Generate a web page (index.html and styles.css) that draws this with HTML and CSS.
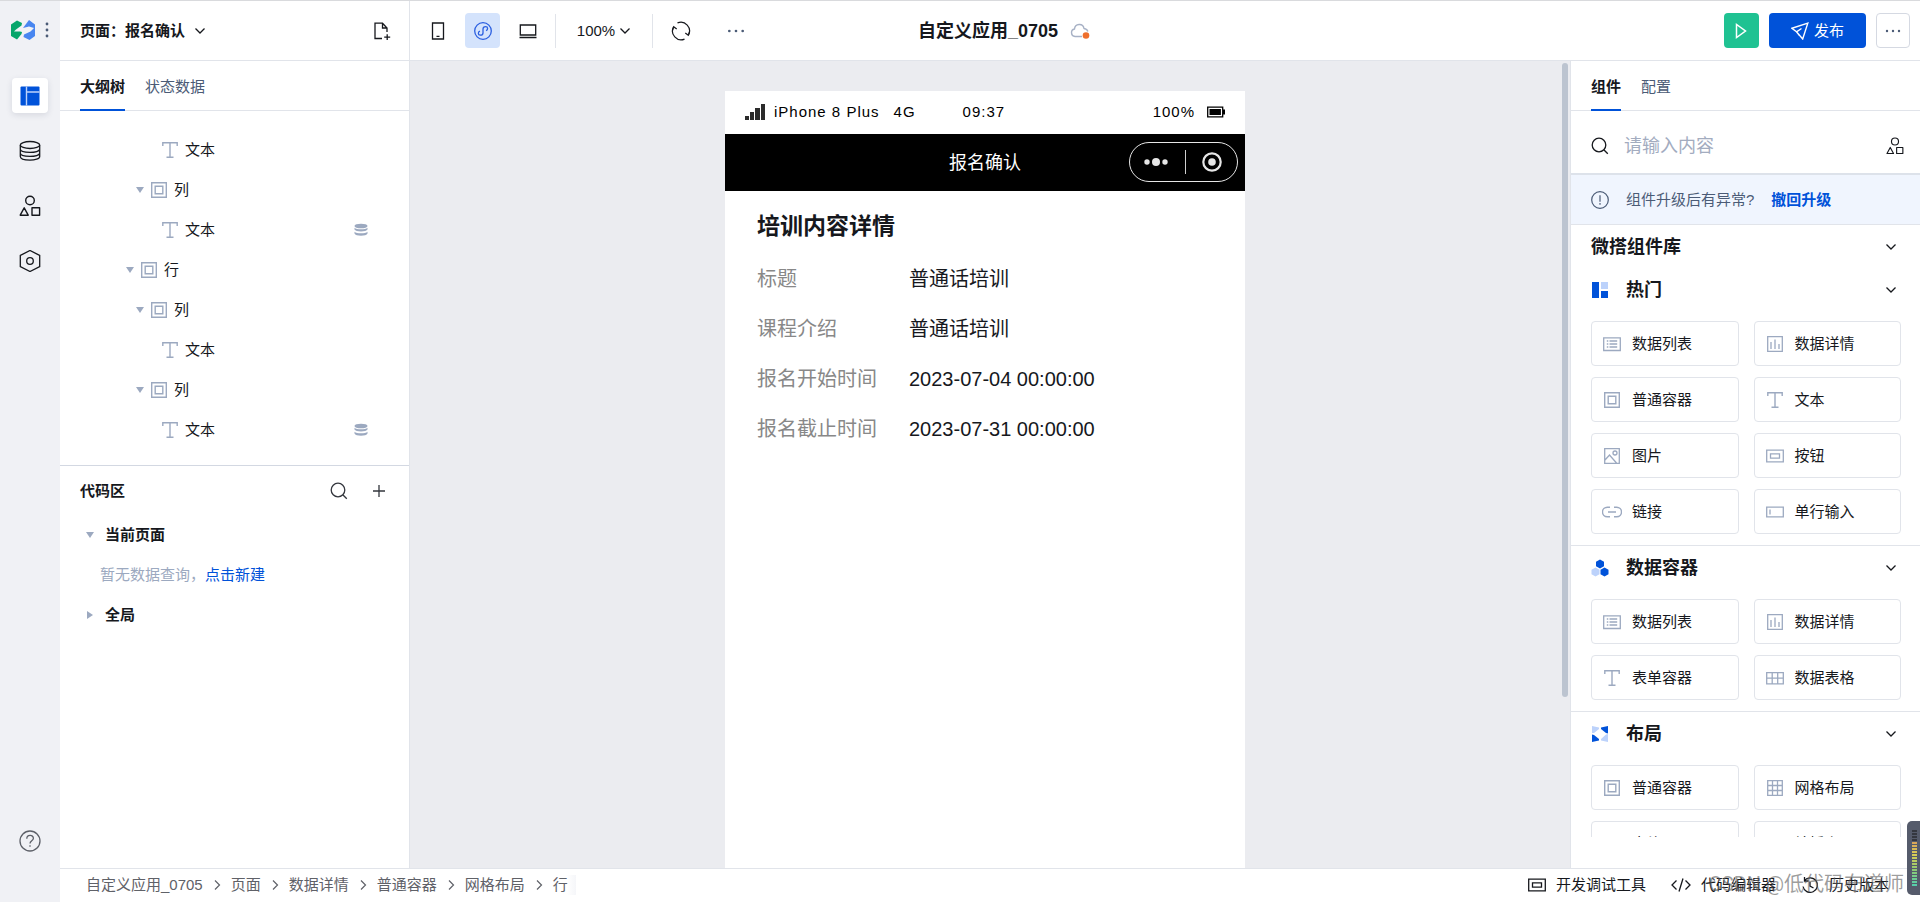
FILE: index.html
```
<!DOCTYPE html>
<html lang="zh-CN">
<head>
<meta charset="utf-8">
<title>自定义应用_0705</title>
<link rel="stylesheet" href="styles.css">
</head>
<body>
<svg class="sprite" aria-hidden="true">
  <symbol id="chevron" viewBox="0 0 12 12"><path d="M1.500 3.500 6 8l4.500-4.500" fill="none" stroke="currentColor" stroke-width="1.300"/></symbol>
  <symbol id="next" viewBox="0 0 12 12"><path d="M4 1.500 8.500 6 4 10.500" fill="none" stroke="currentColor" stroke-width="1.200"/></symbol>
  <symbol id="down" viewBox="0 0 8 8"><path d="M0 1h8L4 7z" fill="currentColor"/></symbol>
  <symbol id="right" viewBox="0 0 8 8"><path d="M1 0v8l6-4z" fill="currentColor"/></symbol>
  <symbol id="dots" viewBox="0 0 18 18"><g fill="currentColor"><circle cx="3" cy="9" r="1.200"/><circle cx="9" cy="9" r="1.200"/><circle cx="15" cy="9" r="1.200"/></g></symbol>
  <symbol id="search" viewBox="0 0 18 18"><g fill="none" stroke="currentColor" stroke-width="1.300"><circle cx="8" cy="8" r="6.800"/><path d="m12.800 12.800 4 4"/></g></symbol>
  <symbol id="shapes" viewBox="0 0 22 22"><g fill="none" stroke="currentColor" stroke-width="1.400" stroke-linejoin="round"><circle cx="11" cy="5.500" r="4.300"/><path d="M5.200 12.800 1.200 20.200h8zM13 12.800h7.600v7.400H13z"/></g></symbol>
  <symbol id="text" viewBox="0 0 18 18"><path d="M1.800 5V1.800h14.400V5M9 1.800v14.400M5.500 16.200h7" fill="none" stroke="currentColor" stroke-width="1.400"/></symbol>
  <symbol id="box" viewBox="0 0 18 18"><g fill="none" stroke="currentColor" stroke-width="1.400"><path d="M1.700 1.700h14.600v14.600H1.700z"/><path d="M5.200 5.200h7.600v7.600H5.200z"/></g></symbol>
  <symbol id="bound" viewBox="0 0 14 14"><g fill="currentColor"><ellipse cx="7" cy="3" rx="6.500" ry="2.300"/><path d="M.5 4.800c2 2 11 2 13 0v1.800c-1 2.600-12 2.600-13 0zM.5 8.700c2 2 11 2 13 0v1.800c-1 2.900-12 2.900-13 0z"/></g></symbol>
  <symbol id="list" viewBox="0 0 18 18"><path d="M.7 2.800h16.600v12.700H.7zM3.800 6h1.500M3.800 9h1.500M3.800 12h1.500M6.500 6h7.700M6.500 9h7.700M6.500 12h7.700" fill="none" stroke="currentColor" stroke-width="1.300"/></symbol>
  <symbol id="chart" viewBox="0 0 18 18"><path d="M1.700 1.700h14.600v14.600H1.700zM5 7v7M9 4.500V14M13 9v5" fill="none" stroke="currentColor" stroke-width="1.300"/></symbol>
  <symbol id="image" viewBox="0 0 18 18"><g fill="none" stroke="currentColor" stroke-width="1.300"><path d="M1.700 1.700h14.600v14.600H1.700zM2 13l4.500-5 7 8"/><circle cx="12" cy="6" r="2"/></g></symbol>
  <symbol id="btn" viewBox="0 0 18 18"><path d="M.7 3.200h16.600v11.600H.7zM4.500 6.800h9v4.400h-9z" fill="none" stroke="currentColor" stroke-width="1.300"/></symbol>
  <symbol id="link" viewBox="0 0 20 18"><path d="M8 4.200H5.300a4.800 4.800 0 0 0 0 9.600H8M12 4.200h2.700a4.800 4.800 0 0 1 0 9.600H12M6 9h8" fill="none" stroke="currentColor" stroke-width="1.400"/></symbol>
  <symbol id="field" viewBox="0 0 18 18"><path d="M.7 4.200h16.600v9.600H.7zM4 6.500v5" fill="none" stroke="currentColor" stroke-width="1.300"/></symbol>
  <symbol id="table" viewBox="0 0 18 18"><path d="M.7 3.700h16.600v11.100H.7zM.7 9.200h16.600M6.200 3.700v11M11.700 3.700v11" fill="none" stroke="currentColor" stroke-width="1.300"/></symbol>
  <symbol id="grid" viewBox="0 0 18 18"><path d="M1.700 1.700h14.600v14.600H1.700zM1.700 6.500h14.600M1.700 11.500h14.600M6.500 1.700v14.600M11.500 1.700v14.600" fill="none" stroke="currentColor" stroke-width="1.300"/></symbol>
</svg>

<nav class="rail" aria-label="主导航">
  <div class="brand">
    <svg class="logo" viewBox="0 0 24 20"><path d="M0 4.500 6 .5l5 2.500-.5 2.500L5 9.500l-2 2h6l2 .5-.5 2L6 19.500l-6-3.500z" fill="#07a66b"/><path d="M24 4.500 18 0l-6 8 6-1.500 5 1.500-3.500 3.500-6.500 3-.5 2.500 6 3 5.500-4z" fill="#4886f0"/></svg>
    <svg class="kebab" viewBox="0 0 4 18"><g fill="#4b5b76"><circle cx="2" cy="3" r="1.400"/><circle cx="2" cy="9" r="1.400"/><circle cx="2" cy="15" r="1.400"/></g></svg>
  </div>
  <button class="rail-btn rail-btn-on" aria-label="页面"><svg class="ic22" viewBox="0 0 22 22"><rect x="1.500" y="1.500" width="19" height="19" rx="1" fill="#0052d9"/><path d="M7.500 1.500v19M7.500 7h13" stroke="#bcd2fb" stroke-width="1.400"/></svg></button>
  <button class="rail-btn" aria-label="数据源"><svg class="ic22" viewBox="0 0 22 22"><g fill="none" stroke="currentColor" stroke-width="1.300"><ellipse cx="11" cy="5" rx="9.700" ry="3.500"/><path d="M1.300 5v11.500c0 4.800 19.400 4.800 19.400 0V5M1.300 9c0 4.500 19.400 4.500 19.400 0M1.300 13c0 4.500 19.400 4.500 19.400 0"/></g></svg></button>
  <button class="rail-btn" aria-label="组件"><svg class="ic22"><use href="#shapes"/></svg></button>
  <button class="rail-btn" aria-label="设置"><svg class="ic22" viewBox="0 0 22 22"><g fill="none" stroke="currentColor" stroke-width="1.300"><path d="m11 .5 9.700 5v11l-9.700 5-9.700-5v-11z"/><circle cx="11" cy="11" r="3.300"/></g></svg></button>
  <button class="rail-btn rail-help" aria-label="帮助"><svg class="ic22" viewBox="0 0 22 22"><g fill="none" stroke="currentColor" stroke-width="1.300"><circle cx="11" cy="11" r="10"/><path d="M7.800 8.700c0-4.300 6.600-4.300 6.600-.4 0 2.400-3.400 2.600-3.400 5.200M11 15.200v1.600"/></g></svg></button>
</nav>

<div class="shell">
  <header class="header">
    <div class="header-left">
      <div class="page-pick">
        <button class="page-btn">页面：报名确认<svg class="ic12"><use href="#chevron"/></svg></button>
        <button class="icon-btn" aria-label="新建页面"><svg class="ic18" viewBox="0 0 18 18"><path d="M9 16.500H2V1.200h7.500L14 6v4M9.500 1.200V6H14M14.200 12.200v6M11.200 15.200h6" fill="none" stroke="currentColor" stroke-width="1.300"/></svg></button>
      </div>
      <div class="tools">
        <button class="tool" aria-label="手机"><svg class="ic18" viewBox="0 0 18 18"><path d="M3.500 1h11v16h-11zM7.500 14.300h3" fill="none" stroke="currentColor" stroke-width="1.300"/></svg></button>
        <button class="tool tool-on" aria-label="小程序"><svg class="ic18" viewBox="0 0 18 18"><g fill="none" stroke="currentColor" stroke-width="1.300"><circle cx="9" cy="9" r="8.300"/><path d="M6 9.200c-2.200.6-2.300 4 .3 4C8 13.200 9 12.500 9 11V7c0-1.500 1-2.300 2.600-2.300 2.700 0 2.500 3.400.4 4"/></g></svg></button>
        <button class="tool" aria-label="电脑"><svg class="ic18" viewBox="0 0 18 18"><path d="M1.300 3h15.400v10H1.300zM.5 15.500h17" fill="none" stroke="currentColor" stroke-width="1.300"/></svg></button>
        <span class="rule"></span>
        <button class="zoom-btn">100%<svg class="ic12"><use href="#chevron"/></svg></button>
        <span class="rule"></span>
        <button class="tool tool-sync" aria-label="刷新"><svg class="ic20" viewBox="0 0 20 20"><g fill="none" stroke="currentColor" stroke-width="1.200"><path d="M6.500 1.900A8.700 8.700 0 0 1 17.500 14M13.500 18.100A8.700 8.700 0 0 1 2.500 6"/><path d="M14.300 12l3 2.300 1.200-3.600M5.700 8l-3-2.300-1.200 3.600"/></g></svg></button>
        <button class="tool" aria-label="更多"><svg class="ic20 slate"><use href="#dots"/></svg></button>
      </div>
    </div>
    <div class="app-title">自定义应用_0705
      <svg class="ic20" viewBox="0 0 20 18"><path d="M12 14.500H5a3.800 3.800 0 0 1-.5-7.500C5 1.500 13 .8 14 6.500c2 .3 3.500 1.500 3.800 3" fill="none" stroke="#a7b1c5" stroke-width="1.400"/><circle cx="16" cy="13.500" r="3.300" fill="#ee6f2d"/></svg>
    </div>
    <div class="actions">
      <button class="run" aria-label="预览"><svg class="ic18" viewBox="0 0 18 18"><path d="M4.500 2.500v13l9-6.500z" fill="none" stroke="currentColor" stroke-width="1.500"/></svg></button>
      <button class="publish"><svg class="ic18" viewBox="0 0 18 18"><path d="M16.800 1.200.9 6.300l4.600 3.500L11.700 17zM5.500 9.800l5-3.300M5.500 9.800l3 3.800" fill="none" stroke="currentColor" stroke-width="1.400"/></svg>发布</button>
      <button class="more" aria-label="更多操作"><svg class="ic18"><use href="#dots"/></svg></button>
    </div>
  </header>

  <div class="work">
    <aside class="left">
      <div class="tabs"><button class="tab tab-on">大纲树</button><button class="tab">状态数据</button></div>
      <div class="tree">
        <div class="node leaf"><svg class="ic18"><use href="#text"/></svg>文本</div>
        <div class="node col"><svg class="ic8"><use href="#down"/></svg><svg class="ic18"><use href="#box"/></svg>列</div>
        <div class="node leaf"><svg class="ic18"><use href="#text"/></svg>文本<svg class="ic14 bound"><use href="#bound"/></svg></div>
        <div class="node row"><svg class="ic8"><use href="#down"/></svg><svg class="ic18"><use href="#box"/></svg>行</div>
        <div class="node col"><svg class="ic8"><use href="#down"/></svg><svg class="ic18"><use href="#box"/></svg>列</div>
        <div class="node leaf"><svg class="ic18"><use href="#text"/></svg>文本</div>
        <div class="node col"><svg class="ic8"><use href="#down"/></svg><svg class="ic18"><use href="#box"/></svg>列</div>
        <div class="node leaf"><svg class="ic18"><use href="#text"/></svg>文本<svg class="ic14 bound"><use href="#bound"/></svg></div>
      </div>
      <section class="code">
        <div class="code-head"><h2 class="code-title">代码区</h2>
          <button class="icon-btn" aria-label="搜索"><svg class="ic18"><use href="#search"/></svg></button>
          <button class="icon-btn" aria-label="新增"><svg class="ic18" viewBox="0 0 18 18"><path d="M9 3v12M3 9h12" stroke="currentColor" stroke-width="1.300"/></svg></button>
        </div>
        <div class="group"><svg class="ic8"><use href="#down"/></svg>当前页面</div>
        <p class="empty">暂无数据查询，<a class="create" href="#">点击新建</a></p>
        <div class="group"><svg class="ic8"><use href="#right"/></svg>全局</div>
      </section>
    </aside>

    <main class="canvas">
      <div class="stage">
        <div class="phone">
          <div class="status">
            <svg class="ic20" viewBox="0 0 20 18"><path d="M0 13h4v4H0zM5 9h4v8H5zM10 5h5v12h-5zM16 1h4v16h-4z" fill="#2b2b2b"/></svg>
            <span class="device">iPhone 8 Plus</span><span class="net">4G</span><span class="clock">09:37</span>
            <span class="level">100%</span>
            <svg class="ic18" viewBox="0 0 18 18"><path d="M.7 4.200h15v9.600H.7z" fill="none" stroke="#000" stroke-width="1.300"/><path d="M2.500 6h11.400v6H2.500zM16 6.500h2v5h-2z"/></svg>
          </div>
          <div class="navbar">
            <span>报名确认</span>
            <div class="capsule">
              <svg class="cap-dots" viewBox="0 0 24 12"><g fill="currentColor"><circle cx="3" cy="6" r="2.700"/><circle cx="12" cy="6" r="4"/><circle cx="21" cy="6" r="2.700"/></g></svg>
              <span class="cap-rule"></span>
              <svg class="ic20" viewBox="0 0 20 20"><circle cx="10" cy="10" r="8.700" fill="none" stroke="currentColor" stroke-width="2.200"/><circle cx="10" cy="10" r="3.800" fill="currentColor"/></svg>
            </div>
          </div>
          <div class="detail">
            <h1 class="detail-title">培训内容详情</h1>
            <dl class="pairs">
              <dt>标题</dt><dd>普通话培训</dd>
              <dt>课程介绍</dt><dd>普通话培训</dd>
              <dt>报名开始时间</dt><dd>2023-07-04 00:00:00</dd>
              <dt>报名截止时间</dt><dd>2023-07-31 00:00:00</dd>
            </dl>
          </div>
        </div>
      </div>
      <div class="track"><div class="thumb"></div></div>
    </main>

    <aside class="right">
      <div class="tabs"><button class="tab tab-on">组件</button><button class="tab">配置</button></div>
      <div class="search">
        <svg class="ic18"><use href="#search"/></svg>
        <input class="search-input" type="text" placeholder="请输入内容" aria-label="搜索组件">
        <svg class="ic18"><use href="#shapes"/></svg>
      </div>
      <div class="notice">
        <svg class="ic18" viewBox="0 0 18 18"><g fill="none" stroke="currentColor" stroke-width="1.200"><circle cx="9" cy="9" r="8.300"/><path d="M9 4.200v6.600M9 12v1.700"/></g></svg>
        <span>组件升级后有异常?</span><a class="undo" href="#">撤回升级</a>
      </div>
      <div class="library">
        <button class="lib-head">微搭组件库<svg class="ic12"><use href="#chevron"/></svg></button>
        <section class="lib">
          <button class="lib-head"><svg class="ic18" viewBox="0 0 18 18"><path d="M1 1h7v16H1zM10 10h7v7h-7z" fill="#0052d9"/><path d="M10 1h7v7h-7z" fill="#bcd2fb"/></svg>热门<svg class="ic12"><use href="#chevron"/></svg></button>
          <div class="cards">
            <button class="card"><svg class="ic18"><use href="#list"/></svg>数据列表</button>
            <button class="card"><svg class="ic18"><use href="#chart"/></svg>数据详情</button>
            <button class="card"><svg class="ic18"><use href="#box"/></svg>普通容器</button>
            <button class="card"><svg class="ic18"><use href="#text"/></svg>文本</button>
            <button class="card"><svg class="ic18"><use href="#image"/></svg>图片</button>
            <button class="card"><svg class="ic18"><use href="#btn"/></svg>按钮</button>
            <button class="card"><svg class="ic18 wide"><use href="#link"/></svg>链接</button>
            <button class="card"><svg class="ic18"><use href="#field"/></svg>单行输入</button>
          </div>
        </section>
        <section class="lib">
          <button class="lib-head"><svg class="ic18" viewBox="0 0 18 18"><path d="m9 .5 4 2.200v4.600L9 9.500 5 7.300V2.700zM13.500 8.500l4 2.200v4.600l-4 2.200-4-2.200v-4.600z" fill="#0052d9"/><path d="m4.500 8.500 4 2.200v4.600l-4 2.200-4-2.200v-4.600z" fill="#bcd2fb"/></svg>数据容器<svg class="ic12"><use href="#chevron"/></svg></button>
          <div class="cards">
            <button class="card"><svg class="ic18"><use href="#list"/></svg>数据列表</button>
            <button class="card"><svg class="ic18"><use href="#chart"/></svg>数据详情</button>
            <button class="card"><svg class="ic18"><use href="#text"/></svg>表单容器</button>
            <button class="card"><svg class="ic18"><use href="#table"/></svg>数据表格</button>
          </div>
        </section>
        <section class="lib">
          <button class="lib-head"><svg class="ic18" viewBox="0 0 18 18"><path d="M17 1v7.500l-2-.5-5-4V2.500zM1 17V9.500l2 .5 5 4v1.500z" fill="#0052d9"/><path d="M1 1l7 1.500V4L3 8H1zM17 17l-7-1.500V14l5-4.500 2-.5z" fill="#bcd2fb"/></svg>布局<svg class="ic12"><use href="#chevron"/></svg></button>
          <div class="cards">
            <button class="card"><svg class="ic18"><use href="#box"/></svg>普通容器</button>
            <button class="card"><svg class="ic18"><use href="#grid"/></svg>网格布局</button>
            <button class="card"><svg class="ic18"><use href="#list"/></svg>卡片</button>
            <button class="card"><svg class="ic18"><use href="#field"/></svg>轮播容器</button>
          </div>
        </section>
      </div>
    </aside>
  </div>

  <footer class="footer">
    <nav class="crumbs" aria-label="路径">
      <span>自定义应用_0705</span><svg class="ic12"><use href="#next"/></svg>
      <span>页面</span><svg class="ic12"><use href="#next"/></svg>
      <span>数据详情</span><svg class="ic12"><use href="#next"/></svg>
      <span>普通容器</span><svg class="ic12"><use href="#next"/></svg>
      <span>网格布局</span><svg class="ic12"><use href="#next"/></svg>
      <span class="crumb-last">行</span>
    </nav>
    <div class="dev">
      <button class="dev-btn"><svg class="ic18"><use href="#btn"/></svg>开发调试工具</button>
      <button class="dev-btn"><svg class="ic20" viewBox="0 0 20 18"><path d="M5.500 4.500 1 9l4.500 4.500M14.500 4.500 19 9l-4.500 4.500M12 2.500l-4 13" fill="none" stroke="currentColor" stroke-width="1.300"/></svg>代码编辑器</button>
      <button class="dev-btn"><svg class="ic18" viewBox="0 0 18 18"><path d="M3.500 4.500a7.300 7.300 0 1 1-1.500 6M3.500 1v4h4M9 5.500V10l3.500 2" fill="none" stroke="currentColor" stroke-width="1.300"/></svg>历史版本</button>
    </div>
  </footer>
</div>
<div class="watermark">CSDN @低代码布道师</div>
<div class="meter"><div class="bars"></div></div>
</body>
</html>
```
FILE: styles.css
```
* { box-sizing: border-box; }
body {
  margin: 0;
  height: 100vh;
  display: flex;
  overflow: hidden;
  border-top: 1px solid #d9dadd;
  background: #fff;
  color: #16181d;
  font: 15px/20px "Liberation Sans", "Noto Sans CJK SC", sans-serif;
}
button { margin: 0; padding: 0; border: 0; background: none; color: inherit; font: inherit; display: flex; align-items: center; }
h1, h2, p, dl, dd { margin: 0; font-size: inherit; }
a { text-decoration: none; }
svg { flex: none; display: block; }
.sprite { position: absolute; width: 0; height: 0; }
.ic8 { width: 8px; height: 8px; }
.ic12 { width: 12px; height: 12px; }
.ic14 { width: 14px; height: 14px; }
.ic18 { width: 18px; height: 18px; }
.ic20 { width: 20px; height: 20px; }
.ic22 { width: 22px; height: 22px; }
.slate { color: #4b5b76; }

.rail { flex: none; width: 60px; padding-bottom: 44px; background: #f0f1f5; display: flex; flex-direction: column; align-items: center; gap: 20px; }
.brand { height: 57px; display: flex; align-items: center; gap: 10px; }
.logo { width: 24px; height: 20px; }
.kebab { width: 4px; height: 18px; }
.rail-btn { width: 36px; height: 35px; justify-content: center; border-radius: 4px; }
.rail-btn-on { background: #fff; box-shadow: 0 2px 6px rgba(30, 40, 70, .12); }
.rail-help { margin-top: auto; color: #5d6068; }

.shell { flex: 1; min-width: 0; display: flex; flex-direction: column; }
.header { flex: none; height: 60px; border-bottom: 1px solid #e1e4ea; display: grid; grid-template-columns: 1fr auto 1fr; align-items: center; }
.header-left { display: flex; align-self: stretch; align-items: center; }
.page-pick { width: 350px; height: 59px; padding: 0 18px 0 20px; border-right: 1px solid #e1e4ea; display: flex; align-items: center; justify-content: space-between; }
.page-btn { gap: 9px; font-weight: 600; }
.tools { display: flex; align-items: center; padding-left: 10px; gap: 10px; }
.tool { width: 35px; height: 35px; justify-content: center; border-radius: 4px; }
.tool-on { background: #d4e3fc; color: #2b5fe0; }
.tool-sync { margin-right: 10px; }
.rule { width: 1px; height: 34px; background: #e1e4ea; }
.zoom-btn { width: 76px; justify-content: center; gap: 4px; }
.app-title { padding-left: 28px; display: flex; align-items: center; gap: 12px; font-size: 18px; line-height: 24px; font-weight: 600; }
.actions { display: flex; justify-content: flex-end; gap: 10px; padding-right: 10px; }
.run { width: 35px; height: 35px; justify-content: center; border-radius: 4px; background: #1fc292; color: #fff; }
.publish { height: 35px; padding: 0 22px; gap: 5px; border-radius: 4px; background: #0052d9; color: #fff; }
.more { width: 34px; height: 35px; justify-content: center; border: 1px solid #d5d9e2; border-radius: 4px; color: #4b5b76; }

.work { flex: 1; min-height: 0; display: flex; }
.left { flex: none; width: 350px; border-right: 1px solid #e1e4ea; display: flex; flex-direction: column; }
.tabs { flex: none; height: 50px; padding: 0 20px; border-bottom: 1px solid #e1e4ea; display: flex; gap: 20px; }
.tab { height: 50px; padding-top: 3px; border-bottom: 2px solid transparent; color: #4b5b76; }
.tab-on { border-bottom-color: #0052d9; color: #16181d; font-weight: 600; }
.tree { padding: 19px 0 15px; border-bottom: 1px solid #d3d8e2; }
.node { height: 40px; display: flex; align-items: center; gap: 6px; padding-right: 41px; }
.node svg { color: #9ca9c0; }
.leaf { padding-left: 101px; }
.col { padding-left: 76px; }
.row { padding-left: 66px; }
.bound { margin-left: auto; }
.code { padding: 5px 0 0 20px; }
.code-head { height: 40px; margin-bottom: 4px; padding-right: 21px; display: flex; align-items: center; gap: 22px; color: #33363d; }
.code-title { margin-right: auto; font-weight: 600; color: #16181d; }
.group { height: 40px; padding-left: 6px; display: flex; align-items: center; gap: 11px; font-weight: 600; }
.group svg { color: #9ca9c0; }
.empty { height: 40px; padding-left: 20px; line-height: 40px; color: #9ca9c0; }
.create { color: #0052d9; }

.canvas { flex: 1; min-width: 0; background: #ebecf0; display: flex; }
.stage { flex: 1; padding-top: 30px; display: flex; justify-content: center; }
.track { width: 10px; padding: 2px; }
.thumb { height: 79%; border-radius: 3px; background: #bcc4d0; }
.phone { width: 520px; background: #fff; }
.status { height: 43px; padding: 0 20px 2px; display: flex; align-items: center; color: #000; letter-spacing: 1px; }
.device { margin-left: 9px; }
.net { margin-left: 14px; }
.clock { margin-left: 47px; }
.level { margin: 0 12px 0 auto; }
.navbar { position: relative; height: 57px; background: #000; color: #fff; display: flex; align-items: center; justify-content: center; font-size: 18px; }
.capsule { position: absolute; right: 7px; top: 8px; width: 109px; height: 40px; border: 1px solid #e6e6e6; border-radius: 20px; display: flex; align-items: center; justify-content: space-between; padding: 0 15px 0 14px; color: #e6e6e6; }
.cap-dots { width: 24px; height: 12px; }
.cap-rule { width: 1px; height: 24px; background: #cfcfcf; }
.detail { padding: 20px 32px; }
.detail-title { font-size: 23px; line-height: 30px; font-weight: 700; }
.pairs { padding-top: 13px; display: grid; grid-template-columns: 152px 1fr; font-size: 20px; line-height: 50px; }
.pairs dt { color: #888; }

.right { flex: none; width: 350px; padding-bottom: 31px; border-left: 1px solid #e1e4ea; display: flex; flex-direction: column; }
.search { flex: none; height: 64px; padding: 8px 16px 0 20px; border-bottom: 2px solid #dde2ea; display: flex; align-items: center; gap: 15px; }
.search-input { flex: 1; min-width: 0; padding: 0; border: 0; outline: 0; background: none; font: inherit; font-size: 18px; line-height: 26px; height: 26px; }
.search-input::placeholder { color: #a3acbf; opacity: 1; }
.notice { flex: none; height: 50px; padding: 0 20px; border-bottom: 1px solid #e1e4ea; background: #f0f5fe; display: flex; align-items: center; gap: 17px; color: #4b5b76; }
.undo { color: #0052d9; font-weight: 600; }
.library { flex: 1; min-height: 0; overflow: hidden; }
.lib { border-bottom: 1px solid #e1e4ea; }
.lib-head { width: 100%; height: 43px; padding: 0 23px 0 20px; gap: 17px; font-size: 18px; font-weight: 700; }
.lib-head .ic12 { margin-left: auto; }
.cards { padding: 10px 19px 11px 20px; display: grid; grid-template-columns: 1fr 1fr; gap: 11px 15px; }
.card { height: 45px; padding: 0 11px; gap: 11px; border: 1px solid #e1e4ea; border-radius: 4px; }
.card svg { color: #9ca9c0; }
.card .wide { width: 20px; margin: 0 -1px; }

.footer { flex: none; height: 34px; padding: 0 31px 2px 26px; border-top: 1px solid #e1e4ea; display: flex; align-items: center; justify-content: space-between; }
.crumbs { display: flex; align-items: center; gap: 8px; color: #5f6168; }
.crumb-last { padding-right: 8px; background: linear-gradient(90deg, #fff 60%, #f5f6f9); }
.dev { display: flex; gap: 25px; }
.dev-btn { gap: 10px; }
.watermark { position: absolute; right: 16px; bottom: 5px; font: 20px/26px Roboto, "Noto Sans CJK SC", sans-serif; color: rgba(90, 90, 90, .6); }
.meter { position: absolute; right: 0; bottom: 7px; width: 13px; height: 74px; padding: 8px 3px 8px 5px; border-radius: 5px 0 0 5px; background: #555b6b; }
.bars { height: 100%; background: repeating-linear-gradient(#555b6b 0 1px, transparent 1px 3px), linear-gradient(#34373f 0 20%, #d9a05a 21%, #d8cf55 45%, #8fca72 70%, #4fd0b0); }
```
